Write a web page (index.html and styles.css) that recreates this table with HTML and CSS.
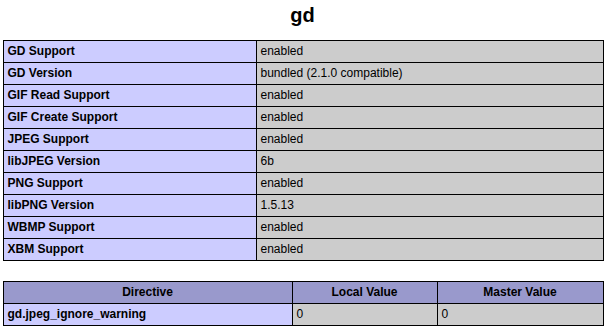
FILE: index.html
```html
<!DOCTYPE html>
<html>
<head>
<meta charset="utf-8">
<link rel="stylesheet" href="styles.css">
</head>
<body>
<div class="center">
<h2 class="title">gd</h2>
<table class="info">
<colgroup><col class="c-e"><col class="c-v"></colgroup>
<tr><td class="e">GD Support</td><td class="v">enabled</td></tr>
<tr><td class="e">GD Version</td><td class="v">bundled (2.1.0 compatible)</td></tr>
<tr><td class="e">GIF Read Support</td><td class="v">enabled</td></tr>
<tr><td class="e">GIF Create Support</td><td class="v">enabled</td></tr>
<tr><td class="e">JPEG Support</td><td class="v">enabled</td></tr>
<tr><td class="e">libJPEG Version</td><td class="v">6b</td></tr>
<tr><td class="e">PNG Support</td><td class="v">enabled</td></tr>
<tr><td class="e">libPNG Version</td><td class="v">1.5.13</td></tr>
<tr><td class="e">WBMP Support</td><td class="v">enabled</td></tr>
<tr><td class="e">XBM Support</td><td class="v">enabled</td></tr>
</table>
<table class="info directives">
<colgroup><col class="c-d"><col class="c-l"><col class="c-m"></colgroup>
<tr class="h"><th>Directive</th><th>Local Value</th><th>Master Value</th></tr>
<tr><td class="e">gd.jpeg_ignore_warning</td><td class="v">0</td><td class="v">0</td></tr>
</table>
</div>
</body>
</html>
```
FILE: styles.css
```css
html, body {
  margin: 0;
  padding: 0;
  background: #fff;
  color: #000;
  font-family: "Liberation Sans", Arial, sans-serif;
}
.center {
  display: flex;
  flex-direction: column;
  align-items: center;
}
.title {
  margin: 0;
  padding-top: 3px;
  height: 40px;
  box-sizing: border-box;
  font-size: 20px;
  line-height: 24px;
  font-weight: bold;
  text-align: center;
}
.info {
  width: 600px;
  border-collapse: collapse;
  table-layout: fixed;
  margin-left: 1px;
}
.directives {
  margin-top: 20px;
}
.c-e { width: 253px; }
.c-v { width: 347px; }
.c-d { width: 289px; }
.c-l { width: 145px; }
.c-m { width: 166px; }
.info td, .info th {
  border: 1px solid #000;
  font-size: 12px;
  line-height: 15px;
  padding: 3px 4px;
  vertical-align: baseline;
  color: #000;
  text-align: left;
}
.info .e {
  background: #ccccff;
  font-weight: bold;
}
.info .v {
  background: #cccccc;
}
.info .h th {
  background: #9999cc;
  font-weight: bold;
  text-align: center;
}
```
